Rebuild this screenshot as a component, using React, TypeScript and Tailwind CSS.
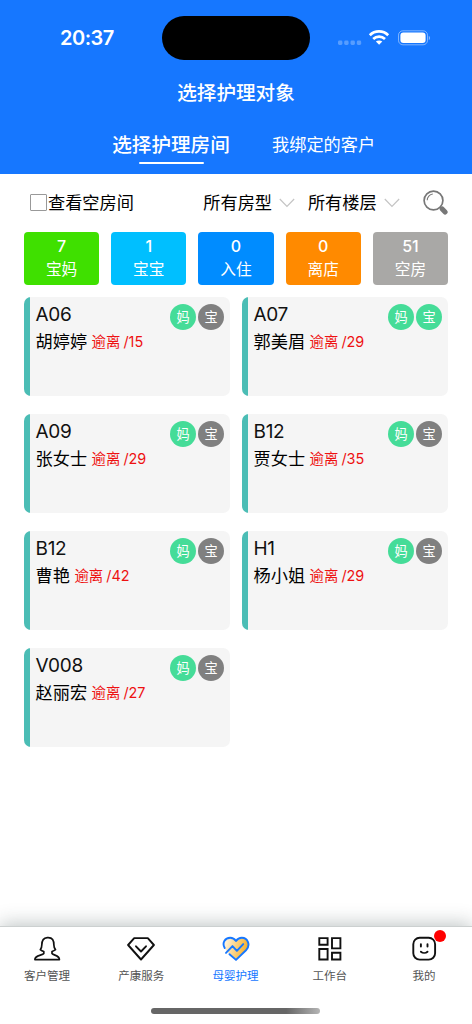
import type { ReactNode } from "react"

const stats = [
  { count: 7, label: "宝妈", color: "bg-[#3fe000]" },
  { count: 1, label: "宝宝", color: "bg-[#00bfff]" },
  { count: 0, label: "入住", color: "bg-[#008cff]" },
  { count: 0, label: "离店", color: "bg-[#ff8a00]" },
  { count: 51, label: "空房", color: "bg-[#a9a8a6]" },
]

const rooms = [
  { room: "A06", name: "胡婷婷", days: 15, baby: false },
  { room: "A07", name: "郭美眉", days: 29, baby: true },
  { room: "A09", name: "张女士", days: 29, baby: false },
  { room: "B12", name: "贾女士", days: 35, baby: false },
  { room: "B12", name: "曹艳", days: 42, baby: false },
  { room: "H1", name: "杨小姐", days: 29, baby: false },
  { room: "V008", name: "赵丽宏", days: 27, baby: false },
]

function StatusBar() {
  return (
    <div className="flex h-[60px] pt-4">
      <div className="w-[162px] pl-[60px] pt-[7px] text-[20px] leading-[30px] font-semibold tracking-[-0.5px]">20:37</div>
      <div className="h-[44px] w-[148px] rounded-full bg-black" />
      <div className="flex h-[44px] items-center pl-[28px]">
        <svg className="h-[16px] w-[92px]" viewBox="0 0 92 16" fill="none">
          <g fill="#fff" opacity="0.28">
            <rect x="0" y="10.5" width="4.4" height="4.4" rx="1.4" />
            <rect x="6.2" y="10.5" width="4.4" height="4.4" rx="1.4" />
            <rect x="12.5" y="10.5" width="4.4" height="4.4" rx="1.4" />
            <rect x="18.8" y="10.5" width="4.4" height="4.4" rx="1.4" />
          </g>
          <g stroke="#fff" strokeWidth="2.7">
            <path d="M31.8 5.2C36.9.2 45.1.2 50.2 5.2" />
            <path d="M35.2 8.9C38.5 5.8 43.7 5.8 47 8.9" />
          </g>
          <path d="M37.9 11.6c1.8-1.6 4.6-1.6 6.4 0l-3.2 3.2z" fill="#fff" />
          <rect x="60.5" y=".8" width="29" height="14" rx="4.4" stroke="#fff" strokeOpacity=".45" />
          <rect x="62.4" y="2.6" width="25.2" height="10.5" rx="3" fill="#fff" />
          <path d="M90.8 6v4c1.6-.7 1.6-3.3 0-4" fill="#fff" opacity=".5" />
        </svg>
      </div>
    </div>
  )
}

function Chevron() {
  return (
    <svg className="h-[10px] w-[16px]" viewBox="0 0 16 10" fill="none" stroke="#c4c4c4" strokeWidth="1.2">
      <path d="M.8 1 8 8.5 15.2 1" />
    </svg>
  )
}

function SearchIcon() {
  return (
    <svg className="h-[25px] w-[25px]" viewBox="0 0 25 25" fill="none" stroke="#777">
      <circle cx="10.5" cy="10.5" r="9.4" strokeWidth="1.7" />
      <path d="M4.2 10.2c0-3.2 2.5-5.9 5.6-6.2" strokeWidth="1.1" />
      <path d="m16.9 16.9 2 2" strokeWidth="1.8" />
      <path d="m19.2 19 2.9 3" strokeWidth="5" strokeLinecap="round" />
    </svg>
  )
}

function Tag({ text, active }: { text: string; active: boolean }) {
  return (
    <span
      className={`flex h-[26px] w-[26px] items-center justify-center rounded-full pt-[2px] text-[13.2px] leading-none text-white ${
        active ? "bg-[#45dc98]" : "bg-[#808080]"
      }`}
    >
      {text}
    </span>
  )
}

function NavItem({ label, active, children }: { label: string; active?: boolean; children: ReactNode }) {
  return (
    <div className={`flex flex-1 flex-col items-center pt-[8px] ${active ? "text-[#1677ff]" : "text-[#555]"}`}>
      <div className="relative h-[28px] w-[28px]">{children}</div>
      <span className="mt-[4px] text-[11.5px] leading-[18px]">{label}</span>
    </div>
  )
}

export default function App() {
  return (
    <div className="flex h-[1024px] w-[472px] flex-col overflow-hidden bg-white font-['Inter','Noto_Sans_CJK_SC',sans-serif] text-[#111]">
      <header className="h-[173.5px] bg-[#1677ff] text-white">
        <StatusBar />
        <h1 className="mt-[18px] text-center text-[19.6px] leading-[30px] font-medium">选择护理对象</h1>
        <div className="mt-[22px] flex pl-[112px]">
          <div className="flex w-[118px] flex-col items-center">
            <span className="text-[19.6px] leading-[30px] font-medium whitespace-nowrap">选择护理房间</span>
            <span className="mt-[1.5px] h-[2.5px] w-[65px] rounded-full bg-white" />
          </div>
          <span className="ml-[42px] text-[17.2px] leading-[30px] whitespace-nowrap">我绑定的客户</span>
        </div>
      </header>

      <main className="flex-1 px-6">
        <div className="flex h-[58.5px] items-center pl-[6px] text-[17.2px] text-black">
          <span className="h-[17px] w-[17px] rounded-[1px] border border-[#999]" />
          <span className="ml-px w-[156px] pt-px">查看空房间</span>
          <span className="w-[76px] pt-px">所有房型</span>
          <Chevron />
          <span className="ml-[13px] w-[76px] pt-px">所有楼层</span>
          <Chevron />
          <span className="ml-[23.5px]">
            <SearchIcon />
          </span>
        </div>

        <div className="grid grid-cols-5 gap-[12px]">
          {stats.map((s) => (
            <div key={s.label} className={`h-[53px] rounded-[4px] pt-[2px] text-center text-white ${s.color}`}>
              <div className="text-[16px] leading-[24px] font-medium">{s.count}</div>
              <div className="text-[15.7px] leading-[24px]">{s.label}</div>
            </div>
          ))}
        </div>

        <div className="mt-[12px] grid grid-cols-2 gap-x-[12px] gap-y-[18px]">
          {rooms.map((r) => (
            <div
              key={r.name}
              className="flex h-[99px] items-start overflow-hidden rounded-[7px] bg-[#f5f5f5]"
            >
              <div className="h-full w-[6px] bg-[#4bbdb5]" />
              <div className="flex-1 pl-[5.5px] pt-[4px]">
                <div className="text-[19px] leading-[28px] tracking-[-0.3px]">{r.room}</div>
                <div className="flex items-center leading-[26px] whitespace-nowrap">
                  <span className="text-[17.2px] text-black">{r.name}</span>
                  <span className="ml-[4.5px] text-[14.4px] text-[#ee1111]">
                    逾离<span className="ml-[3px]">/{r.days}</span>
                  </span>
                </div>
              </div>
              <div className="flex gap-[2px] pt-[7px] pr-[6px]">
                <Tag text="妈" active />
                <Tag text="宝" active={r.baby} />
              </div>
            </div>
          ))}
        </div>
      </main>

      <nav className="h-[98px] border-t border-[#ccd0d0] bg-white pr-px shadow-[0_-2px_18px_rgba(40,60,60,0.3)]">
        <div className="flex h-[81px]">
          <NavItem label="客户管理">
            <svg viewBox="0 0 28 28" fill="none" stroke="#111" strokeWidth="1.7" strokeLinejoin="round">
              <path d="M10.8 16.5C9.7 16.2 8.6 15.8 7.3 14.7c1.2-1.1 1.5-2.5 1.5-4.6 0-4.5 1.8-7.2 5.5-7.5 5.4-.5 6.6 3.1 6.6 7.5 0 2.1.4 3.5 1.6 4.6-1.2 1-2.3 1.4-3.5 1.8v2c1.5 2 7.6 1.8 7.4 6.1H1.9c-.4-4.3 7.6-4.2 8.9-6.1z" />
            </svg>
          </NavItem>
          <NavItem label="产康服务">
            <svg viewBox="0 0 28 28" fill="none" stroke="#111" strokeWidth="1.9" strokeLinejoin="round" strokeLinecap="round">
              <path d="M7.2 3.1h13.6L26.9 10 14 24.5 1.1 10z" />
              <path d="m9 11.3 5 5.2 5-5.2" />
            </svg>
          </NavItem>
          <NavItem label="母婴护理" active>
            <svg viewBox="0 0 28 28" fill="none" strokeLinecap="round" strokeLinejoin="round">
              <defs>
                <linearGradient id="heart" x1="3" y1="8" x2="25" y2="14" gradientUnits="userSpaceOnUse">
                  <stop stopColor="#fff3db" />
                  <stop offset="1" stopColor="#f7b02a" />
                </linearGradient>
              </defs>
              <path
                d="M14 24.9 4 15.3C-1 10 2.3 2.8 8.2 2.8c2.5 0 4.5 1.3 5.8 3.2 1.3-1.9 3.3-3.2 5.8-3.2 5.9 0 9.2 7.2 4.2 12.5z"
                fill="url(#heart)"
              />
              <g stroke="#1677ff" strokeWidth="1.9">
                <path d="M2.7 13C-.3 7.9 3 2.8 8.2 2.8c2.5 0 4.5 1.3 5.8 3.2 1.3-1.9 3.3-3.2 5.8-3.2 5.9 0 9.2 7.2 4.2 12.5L14 24.9l-6.5-5.7" />
                <path d="m4 17.9 6.5-6.8 4.4 4.7 6.3-6.7" />
              </g>
            </svg>
          </NavItem>
          <NavItem label="工作台">
            <svg viewBox="0 0 28 28" fill="none" stroke="#111" strokeWidth="1.9">
              <path d="M3.3 3.1h8.3v6.7H3.3zM16 3.1h8.4v10.3H16zM3.3 14h8.3v10.5H3.3zM16 17.8h8.4v6.7H16z" />
            </svg>
          </NavItem>
          <NavItem label="我的">
            <svg viewBox="0 0 28 28" fill="none" stroke="#111" strokeWidth="1.9" strokeLinecap="round">
              <rect x="3.3" y="2.8" width="21.8" height="21.8" rx="6.4" />
              <path d="M10.9 9.3v2.2M17.5 9.3v2.2M10.9 16.7c1.8 1.6 4.8 1.6 6.6 0" />
            </svg>
            <span className="absolute -top-[5px] left-[24px] h-[12px] w-[12px] rounded-full bg-[#ff0000]" />
          </NavItem>
        </div>
        <div className="mx-auto h-[6px] w-[169px] rounded-full bg-linear-to-r from-[#666] from-80% to-[#b5b5b5]" />
      </nav>
    </div>
  )
}
